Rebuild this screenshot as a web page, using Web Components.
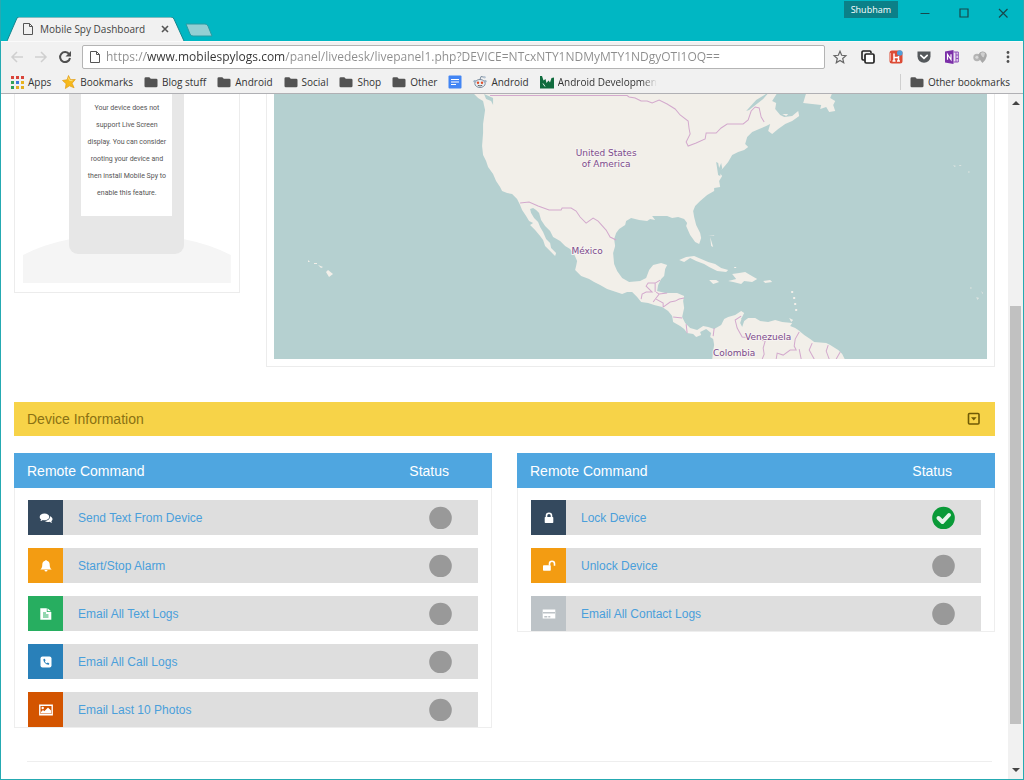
<!DOCTYPE html>
<html lang="en">
<head>
<meta charset="utf-8">
<title>Mobile Spy Dashboard</title>
<style>
  html, body { margin: 0; }
  body { background: #fff; color: #333; font-family: "Liberation Sans", Arial, sans-serif; font-size: 14px; }
</style>
</head>
<body>
<browser-window>
  <title-bar slot="title" tab="Mobile Spy Dashboard" user="Shubham"></title-bar>
  <nav-toolbar slot="toolbar"></nav-toolbar>
  <bookmark-bar slot="bookmarks">
    <bookmark-item icon="apps">Apps</bookmark-item>
    <bookmark-item icon="goldstar">Bookmarks</bookmark-item>
    <bookmark-item icon="folder">Blog stuff</bookmark-item>
    <bookmark-item icon="folder">Android</bookmark-item>
    <bookmark-item icon="folder">Social</bookmark-item>
    <bookmark-item icon="folder">Shop</bookmark-item>
    <bookmark-item icon="folder">Other</bookmark-item>
    <bookmark-item icon="docs" label="Google Docs"></bookmark-item>
    <bookmark-item icon="reddit">Android</bookmark-item>
    <bookmark-item icon="weekly" fade>Android Developmen</bookmark-item>
    <bookmark-item slot="end" icon="folder">Other bookmarks</bookmark-item>
  </bookmark-bar>
  <live-panel>
    <device-preview slot="device">Your device does not support Live Screen display. You can consider rooting your device and then install Mobile Spy to enable this feature.</device-preview>
    <location-map slot="map"></location-map>
    <info-bar slot="info">Device Information</info-bar>
    <command-panel slot="commands" heading="Remote Command">
      <command-row icon="comments" tone="#34495e">Send Text From Device</command-row>
      <command-row icon="bell" tone="#f39c12">Start/Stop Alarm</command-row>
      <command-row icon="file" tone="#27ae60">Email All Text Logs</command-row>
      <command-row icon="phone" tone="#2980b9">Email All Call Logs</command-row>
      <command-row icon="image" tone="#d35400">Email Last 10 Photos</command-row>
    </command-panel>
    <command-panel slot="commands" heading="Remote Command">
      <command-row icon="lock" tone="#34495e" done>Lock Device</command-row>
      <command-row icon="unlock" tone="#f39c12">Unlock Device</command-row>
      <command-row icon="card" tone="#bdc3c7">Email All Contact Logs</command-row>
    </command-panel>
  </live-panel>
</browser-window>

<script>
const ICONS = {
  page: '<path d="M2.500 1.500h6l3 3v8h-9zM8.500 1.500v3h3" fill="none" stroke="#555"/>',
  close: '<path d="M4 4l6 6M10 4l-6 6" stroke="#555" stroke-width="1.600"/>',
  back: '<path d="M13 7H2M7 2L2 7l5 5" fill="none" stroke="#cfcfcf" stroke-width="1.500"/>',
  forward: '<path d="M1 7h11M7 2l5 5-5 5" fill="none" stroke="#cfcfcf" stroke-width="1.500"/>',
  reload: '<path d="M11.200 4.200A5 5 0 1 0 12 8" fill="none" stroke="#505050" stroke-width="2"/><path d="M13 1v5.500H7.500z" fill="#505050"/>',
  minimize: '<path d="M2.500 7.500h9" stroke="#17484c"/>',
  maximize: '<path d="M3 3h8v8H3z" fill="none" stroke="#17484c" stroke-width="1.200"/>',
  quit: '<path d="M3 3l8.500 8.500M11.500 3L3 11.500" stroke="#17484c" stroke-width="1.200"/>',
  star: '<path d="M7 1.300l1.700 4 4.200.400-3.200 2.800 1 4.200L7 10.500l-3.700 2.200 1-4.200L1.100 5.700l4.200-.400z" fill="none" stroke="#666" stroke-width="1.200"/>',
  copy: '<path d="M3.500 10H2.200A1.200 1.200 0 0 1 1 8.800V2.200A1.200 1.200 0 0 1 2.200 1h6.600A1.200 1.200 0 0 1 10 2.200V3" fill="none" stroke="#222" stroke-width="1.600"/><rect x="4" y="4" width="9" height="9" rx="1.300" fill="#fff" stroke="#222" stroke-width="1.700"/>',
  redapp: '<rect x=".500" y=".500" width="13" height="13" rx="2.500" fill="#dc4b35"/><path d="M5 3.500v7M5 7.500h4.500M9.500 6v4.500M3.500 11h3M8 11h3" stroke="#fff" stroke-width="1.500"/><circle cx="10.800" cy="3" r="2.800" fill="#4f9fd8"/><path d="M1.500 3v8" stroke="#f2a092"/>',
  pocket: '<path d="M.500 1.500h13v5a6.500 6.200 0 0 1-13 0z" fill="#55595c"/><path d="M3.800 5.300L7 8.300l3.200-3" fill="none" stroke="#fff" stroke-width="1.700" stroke-linecap="round"/>',
  onenote: '<path d="M8.500 2h4.800v10H8.500M11 2v10M11 5h2.300M11 8.500h2.300" fill="#efe3f6" stroke="#8d4bb8" stroke-width="1"/><path d="M0 1.500L8.500 0v14L0 12.500z" fill="#7b2fa8"/><path d="M2.500 9.700V4.500l3.500 5V4.300" fill="none" stroke="#fff" stroke-width="1.200"/>',
  shade: '<circle cx="4" cy="7.500" r="3.700" fill="#b5b5b5"/><path d="M5.500 4.500Q7 1 10 1.500 14 2 13.800 6 13 10 9.500 13 6 10 5.500 4.500z" fill="#a8a8a8"/><path d="M7.500 3.500q2-2 4.500-.500l-1 4q-2 1-3.500-3.500z" fill="#cfcfcf"/><circle cx="3.800" cy="7.300" r="1.500" fill="#dadada"/>',
  more: '<g fill="#505050"><circle cx="7" cy="2.500" r="1.400"/><circle cx="7" cy="7" r="1.400"/><circle cx="7" cy="11.500" r="1.400"/></g>',
  apps: '<g><path d="M1 1h3v3H1zM6 1h3v3H6zM11 1h3v3h-3z" fill="#d9453a"/><path d="M1 6h3v3H1z" fill="#35a257"/><path d="M6 6h3v3H6z" fill="#3c78d8"/><path d="M11 6h3v3h-3z" fill="#e8b21f"/><path d="M1 11h3v3H1z" fill="#2f9d57"/><path d="M6 11h3v3H6zM11 11h3v3h-3z" fill="#e3ae22"/></g>',
  goldstar: '<path d="M6.500.500l2 4.200 4.800-.200-3.200 3.700 2 4.600-4.700-2-4 2.700.700-4.800L.500 5.500l4.600-.800z" fill="#f6b91c" stroke="#e39c12" stroke-width=".700"/><path d="M6.300 2.500l1.300 3 3 .200" fill="none" stroke="#fde27a"/>',
  folder: '<path d="M.500 3.500a1.300 1.300 0 0 1 1.300-1.300h3.500l1.500 1.500h5.400a1.300 1.300 0 0 1 1.300 1.300v6a1.300 1.300 0 0 1-1.300 1.300H1.800A1.300 1.300 0 0 1 .500 11z" fill="#535353"/>',
  docs: '<rect x=".500" y=".500" width="13" height="13" rx="1" fill="#4285f4"/><path d="M3 4.500h8M3 7h8M3 9.500h5" stroke="#fff" stroke-width="1.200"/>',
  reddit: '<ellipse cx="7" cy="8.500" rx="5.200" ry="4" fill="#e9eef3" stroke="#7d8ea0"/><path d="M7 4.500L8 1.500l3 .700" fill="none" stroke="#7d8ea0"/><circle cx="11.500" cy="2.300" r="1.200" fill="#b7c5d3"/><circle cx="1.800" cy="6.300" r="1.400" fill="#9fb1c3"/><circle cx="12.200" cy="6.300" r="1.400" fill="#9fb1c3"/><circle cx="5" cy="7.800" r="1.200" fill="#e2502a"/><circle cx="9" cy="7.800" r="1.200" fill="#e2502a"/><path d="M4.800 10.300q2.200 1.300 4.400 0" fill="none" stroke="#666"/>',
  weekly: '<path d="M0 1h14v12.500H0z" fill="#0f6b3d"/><path d="M2 1l1.500 4.500L5.500 4l1 4 2-2.500 1.500 2L11.500 3l2.500-.500V1z" fill="#f1f1f1"/><path d="M3 8.500l2 3" stroke="#e6f2ea"/>',
  expand: '<rect x="1.500" y="1.500" width="10.500" height="10.500" rx="1" fill="none" stroke="#6f5a05" stroke-width="1.600"/><path d="M4 5.300h5.600L6.800 8.600z" fill="#6f5a05"/>',
  comments: '<path d="M5.500 2.500C2.700 2.500.700 4 .700 5.900c0 1 .600 1.900 1.500 2.500-.100.600-.500 1.100-.900 1.500 1 0 1.900-.400 2.500-.900.500.100 1.100.200 1.700.200 2.700 0 4.800-1.500 4.800-3.300S8.200 2.500 5.500 2.500z" fill="#fff"/><path d="M11 5.300c.300 2.500-2 4.500-5 4.600.800.700 2 1.100 3.300 1.100.500 0 1-.100 1.400-.200.700.500 1.500.900 2.500.900-.400-.400-.800-.900-.900-1.500.700-.500 1.200-1.200 1.200-2.100 0-1.200-1-2.200-2.500-2.800z" fill="#fff"/>',
  bell: '<path d="M7 1c.500 0 .800.300.800.800 1.900.400 2.900 1.800 2.900 3.700 0 2.700.600 3.900 2 5H1.300c1.400-1.100 2-2.300 2-5 0-1.900 1-3.300 2.900-3.700 0-.500.300-.800.800-.800zM5.500 11h3a1.500 1.500 0 0 1-3 0z" fill="#fff"/>',
  file: '<path d="M1.300 1.300h6.500V5h4.500v7.700h-11zM8.500 1.300l3.600 3h-3.600z" fill="#fff"/><path d="M4 6h3M4 8h5.500M4 10h5.500" stroke="#27ae60"/>',
  phone: '<rect x="1.500" y="1.500" width="11" height="11" rx="2" fill="#fff"/><path d="M4.500 4c-.600 2.800 2.600 6.100 5.500 5.700l.300-1.200-1.500-.900-.900.700C6.700 7.800 6.200 7.100 5.900 6.200l.700-.900L5.700 3.700z" fill="#2980b9"/>',
  image: '<path d="M.800 2.300h12.400v9.400H.800z" fill="none" stroke="#fff" stroke-width="1.400"/><circle cx="3.700" cy="5" r="1.200" fill="#fff"/><path d="M2 10.500V9l2-2 1.300 1.300L9 4.600l3 3v2.900z" fill="#fff"/>',
  lock: '<rect x="2.700" y="6" width="8.600" height="6" rx=".700" fill="#fff"/><path d="M4.500 6.300V4.700a2.500 2.500 0 0 1 5 0v1.600" fill="none" stroke="#fff" stroke-width="1.600"/>',
  unlock: '<rect x="1" y="6.300" width="7.800" height="5.500" rx=".700" fill="#fff"/><path d="M7.500 6.500V4.700a2.500 2.500 0 0 1 5 0v2" fill="none" stroke="#fff" stroke-width="1.600"/>',
  card: '<path d="M.700 2.500h12.600v9H.700z" fill="#fff"/><path d="M1 5.800h12M2.300 9.700h3M6.300 9.700h2" stroke="#bdc3c7" stroke-width="1.400"/>'
};

function define(name, markup, setup) {
  const template = document.createElement('template');
  template.innerHTML = markup;
  customElements.define(name, class extends HTMLElement {
    constructor() {
      super();
      this.attachShadow({ mode: 'open' }).append(template.content.cloneNode(true));
    }
    connectedCallback() { if (setup) setup(this, this.shadowRoot); }
  });
}

define('ui-icon', `
  <style>
    :host { display: inline-flex; flex: none; width: 14px; height: 14px; }
    svg { width: 100%; height: 100%; overflow: visible; }
  </style>
  <svg viewBox="0 0 14 14" aria-hidden="true"></svg>`,
  (host, root) => { root.querySelector('svg').innerHTML = ICONS[host.getAttribute('name')]; });

define('browser-window', `
  <style>
    :host { display: flex; flex-direction: column; min-height: 100vh; box-sizing: border-box;
      border: 1px solid #25aab2; border-top: 0; background: #fff; }
    .body { display: flex; flex: 1; }
    main { flex: 1; min-width: 0; }
  </style>
  <slot name="title"></slot>
  <slot name="toolbar"></slot>
  <slot name="bookmarks"></slot>
  <div class="body"><main><slot></slot></main><scroll-rail></scroll-rail></div>`);

define('title-bar', `
  <style>
    :host { display: flex; align-items: flex-end; height: 41px; background: #00b7c3;
      font: 10px/24px "Open Sans", "Segoe UI", sans-serif; }
    .tab { display: grid; width: 178px; height: 24px; margin-left: 6px; }
    .tab > * { grid-area: 1 / 1; }
    .tab .label { display: flex; align-items: center; gap: 5px; padding: 0 13px 0 14px; color: #444; }
    .label span { flex: 1; white-space: nowrap; }
    button { display: grid; place-items: center; padding: 0; border: 0; background: none; }
    .new { align-self: flex-end; margin-bottom: 4px; }
    .spacer { flex: 1; }
    .user { align-self: flex-start; height: 17px; margin-top: 1px; padding: 0 7px; background: #0b8088; color: #fff;
      font: 9px/17px "Open Sans", "Segoe UI", sans-serif; }
    .controls { display: flex; align-self: flex-start; gap: 25px; padding: 6px 13px 0 20px; }
  </style>
  <div class="tab">
    <svg width="178" height="24" aria-hidden="true"><path d="M0 24L10 1q1-1 2-1h152q2 0 3 2l10 22z" fill="#f1f1f1"/><path d="M0 24L10 1q1-1 2-1h152q2 0 3 2l10 22" fill="none" stroke="#14858d"/></svg>
    <div class="label"><ui-icon name="page"></ui-icon><span></span><button aria-label="Close tab"><ui-icon name="close"></ui-icon></button></div>
  </div>
  <button class="new" aria-label="New tab"><svg width="28" height="14"><path d="M1 1h19q2 0 3 2l4 10H8q-2 0-3-2z" fill="#93cfd3" stroke="#2a9aa2"/></svg></button>
  <div class="spacer"></div>
  <button class="user"></button>
  <div class="controls">
    <button aria-label="Minimize"><ui-icon name="minimize"></ui-icon></button>
    <button aria-label="Maximize"><ui-icon name="maximize"></ui-icon></button>
    <button aria-label="Close"><ui-icon name="quit"></ui-icon></button>
  </div>`,
  (host, root) => {
    root.querySelector('.label span').textContent = host.getAttribute('tab');
    root.querySelector('.user').textContent = host.getAttribute('user');
  });

define('nav-toolbar', `
  <style>
    :host { display: flex; align-items: center; height: 30px; padding: 0 8px 0 9px; gap: 10px; background: #f1f1f1;
      border-top: 1px solid #fafafa; box-sizing: border-box; }
    button { display: grid; place-items: center; padding: 0; border: 0; background: none; }
    .address { flex: 1; display: flex; align-items: center; gap: 4px; height: 24px; box-sizing: border-box;
      padding: 0 5px; background: #fff; border: 1px solid #b4b4b4; border-radius: 2px; }
    input { flex: 1; min-width: 0; height: 22px; padding: 0; border: 0; outline: 0; color: #8c8c8c;
      font: 12px/22px "Open Sans", "Segoe UI", sans-serif;
      background: linear-gradient(90deg, #8c8c8c 40px, #333 40px 179px, #8c8c8c 179px);
      -webkit-background-clip: text; background-clip: text; -webkit-text-fill-color: transparent; }
    .actions { display: flex; gap: 14px; margin-left: -2px; }
  </style>
  <button aria-label="Back"><ui-icon name="back"></ui-icon></button>
  <button aria-label="Forward"><ui-icon name="forward"></ui-icon></button>
  <button aria-label="Reload"><ui-icon name="reload"></ui-icon></button>
  <div class="address">
    <ui-icon name="page"></ui-icon>
    <input type="text" aria-label="Address" value="https://www.mobilespylogs.com/panel/livedesk/livepanel1.php?DEVICE=NTcxNTY1NDMyMTY1NDgyOTI1OQ==">
  </div>
  <div class="actions">
    <button aria-label="Bookmark this page"><ui-icon name="star"></ui-icon></button>
    <button aria-label="Copy"><ui-icon name="copy"></ui-icon></button>
    <button aria-label="Extension"><ui-icon name="redapp"></ui-icon></button>
    <button aria-label="Pocket"><ui-icon name="pocket"></ui-icon></button>
    <button aria-label="OneNote"><ui-icon name="onenote"></ui-icon></button>
    <button aria-label="Extension"><ui-icon name="shade"></ui-icon></button>
    <button aria-label="Menu"><ui-icon name="more"></ui-icon></button>
  </div>`);

define('bookmark-bar', `
  <style>
    :host { display: flex; align-items: center; height: 23px; box-sizing: border-box; padding: 0 13px 0 9px;
      gap: 11px; background: #f1f1f1; border-bottom: 1px solid #b0b0b4; }
    .end { display: flex; margin-left: auto; padding-left: 9px; border-left: 1px solid #cfcfcf; }
  </style>
  <slot></slot>
  <div class="end"><slot name="end"></slot></div>`);

define('bookmark-item', `
  <style>
    :host { display: block; flex: none; }
    a { display: flex; align-items: center; gap: 4px; color: #333; text-decoration: none; white-space: nowrap;
      font: 10px/16px "Open Sans", "Segoe UI", sans-serif; }
    :host([fade]) span { -webkit-mask-image: linear-gradient(90deg, #000 85%, transparent); mask-image: linear-gradient(90deg, #000 85%, transparent); }
  </style>
  <a href="#"><ui-icon></ui-icon><span><slot></slot></span></a>`,
  (host, root) => {
    const old = root.querySelector('ui-icon');
    const icon = document.createElement('ui-icon');
    icon.setAttribute('name', host.getAttribute('icon'));
    old.replaceWith(icon);
    if (host.hasAttribute('label')) {
      root.querySelector('a').setAttribute('aria-label', host.getAttribute('label'));
      root.querySelector('span').remove();
    }
  });

define('scroll-rail', `
  <style>
    :host { display: flex; flex-direction: column; width: 15px; background: #f1f1f1; }
    button { display: grid; place-items: center; height: 17px; padding: 0; border: 0; background: none; }
    .before { flex: 195; }
    .thumb { flex: 418; margin: 0 2px; background: #c1c1c1; }
    .after { flex: 38; }
  </style>
  <button aria-label="Scroll up"><svg width="8" height="5"><path d="M0 5l4-4 4 4z" fill="#444"/></svg></button>
  <div class="before"></div><div class="thumb"></div><div class="after"></div>
  <button aria-label="Scroll down"><svg width="8" height="5"><path d="M0 0l4 4 4-4z" fill="#444"/></svg></button>`);

define('live-panel', `
  <style>
    :host { display: block; padding: 0 13px; }
    .top { display: grid; grid-template-columns: repeat(12, minmax(0, 1fr)); column-gap: 26px; align-items: start; }
    .device { grid-column: span 3; }
    .map { grid-column: span 9; }
    .info { margin: 35px 0 17px; }
    .commands { display: grid; grid-template-columns: 1fr 1fr; gap: 25px; align-items: start; }
    hr { margin: 33px 3px 0 13px; border: 0; border-top: 1px solid #eee; }
  </style>
  <div class="top">
    <div class="device"><slot name="device"></slot></div>
    <div class="map"><slot name="map"></slot></div>
  </div>
  <div class="info"><slot name="info"></slot></div>
  <div class="commands"><slot name="commands"></slot></div>
  <hr>`);

define('device-preview', `
  <style>
    :host { display: block; padding: 0 8px 9px; border: 1px solid #ececec; border-top: 0; }
    .scene { display: grid; justify-items: center; align-items: end; }
    .scene > * { grid-area: 1 / 1; }
    svg { width: 100%; height: 58px; }
    .phone { box-sizing: border-box; width: 115px; margin-bottom: 29px; padding: 0 12px 38px; background: #e7e7e7; border-radius: 0 0 9px 9px; }
    p { margin: 0; padding: 6px 4px 14px; background: #fff; color: #555; text-align: center;
      font: 7px/17px Roboto, "Arial Narrow", sans-serif; }
  </style>
  <div class="scene">
    <svg viewBox="0 0 206 58" preserveAspectRatio="none" aria-hidden="true"><path d="M0 58V30Q40 9 103 9t103 21v28z" fill="#f5f5f5"/></svg>
    <div class="phone"><p><slot></slot></p></div>
  </div>`);

define('location-map', `
  <style>
    :host { display: block; padding: 0 7px 7px; border: 1px solid #ececec; border-top: 0; }
    svg { display: block; width: 100%; height: 265px; background: #b5d0d0; }
    .land path { fill: #f2efe9; }
    .borders { fill: none; stroke: #d3a9cd; stroke-width: 1; }
    text { font: 9px "DejaVu Sans", sans-serif; fill: #7d4a8c; text-anchor: middle; stroke: #f6f3f0; stroke-width: 2; paint-order: stroke; }
  </style>
  <svg viewBox="274 94 713 265" preserveAspectRatio="xMinYMin slice" role="img" aria-label="Map of North and Central America">
    <g class="land">
      <path d="M473 93L478 98 483 101 485 110 484 117 483 124 483 133 482 146 483 155 486 161 488 167 493 174 496 181 500 187 502 191 507 193 512 194 517 199 520 205 522 210 526 216 529 221 533 223 530 225 535 230 540 236 543 240 545 246 550 251 555 256 556 253 551 248 550 243 546 239 543 232 540 227 538 222 534 218 531 213 530 209 533 208 536 210 539 213 541 220 545 226 550 231 553 237 560 241 565 246 570 249 574 254 577 261 576 266 575 270 581 276 589 279 594 282 600 285 607 289 616 292 622 294 627 292 632 292 637 297 641 302 648 303 654 305 662 307 668 311 672 316 673 322 680 326 684 329 687 333 693 334 696 337 701 335 700 332 706 329 711 333 710 337 713 339 714 345 713 351 712 360H845L842 354 838 350 830 345 826 343 814 342 810 339 804 335 798 330 795 328 790 326 792 323 782 322 775 320 768 322 760 321 755 318 748 318 744 321 741 319 744 313 741 311 735 315 728 317 724 319 721 325 714 329 708 327 703 326 697 330 690 328 685 323 682 317 684 308 683 301 684 296 677 293 665 293 657 291 658 285 661 279 664 276 665 269 667 265 661 263 653 265 649 270 646 278 640 281 629 282 622 278 617 271 614 264 613 253 615 246 614 239 616 233 619 229 625 225 626 221 631 218 639 220 647 221 650 219 655 220 652 216 659 216 667 216 672 218 678 217 684 219 687 223 686 226 690 235 695 242 699 244 701 238 700 233 696 225 694 217 693 211 695 206 700 201 707 195 714 191 714 188 720 187 719 181 722 176 719 172 723 168 728 162 732 155 738 152 744 150 748 147 745 144 747 137 752 132 759 129 766 126 770 124 768 131 772 134 778 129 785 124 792 121 799 116 798 111 792 116 784 117 780 115 775 109 776 103 772 101 777 93Z"/>
      <path d="M806 93L803 103 812 104 821 105 820 109 826 107 829 112 835 111 833 105 835 101 830 98 832 93ZM782 114L788 114 786 116ZM679 260L686 257 694 256 701 259 708 262 715 264 721 268 728 270 726 272 717 271 709 267 704 264 696 261 690 258 684 262ZM732 274L739 273 745 272 750 275 757 279 752 282 744 281 741 284 733 282 728 281 736 279ZM709 280L716 280 719 282 713 284ZM763 281L770 280 772 282 765 283ZM710 237L713 247 711 246ZM326 272L328 270 333 274 329 277ZM318 265L323 267 321 268ZM308 260L310 262 308 262ZM314 263h3v1h-3zM734 267h2v1h-2zM791 291h2v2h-2zM793 297h2v2h-2zM794 303h2v2h-2zM795 309h2v2h-2zM789 318l4 2-2 2z"/>
      <path d="M953 165l3 1-2 1zM959 165h2v1h-2zM968 171l2 1-2 1zM970 287l2 1-2 1zM976 297l3 1-2 2zM981 291l2 2-1 1zM708 236l6-1v1z" opacity=".600"/>
    </g>
    <g fill="#b5d0d0"><path d="M484 94l9 4v7l-2-4-5-2zM742 317l2 4-2 6-2-4zM716 162l2 1 1 5 2-5 1 5-2 8-2-1zM746 111l10-11 13-8-6 7-14 11z"/></g>
    <g class="borders">
      <path d="M490 95.500H627L629 97 635 98 641 101 647 101 652 103 659 100 667 104 675 109 680 115 688 121 689 129 690 134 686 142 688 146 696 143 705 139 706 133 716 133 721 128 727 124 743 124 748 120 751 111 755 107 759 108 761 117 764 122"/>
      <path d="M520 203L529 202 538 206 549 210 561 210 562 208 571 208 576 211 580 217 586 223 593 218 598 221 606 230 610 237 616 240"/>
      <path d="M641 299L642 294 646 292 652 292 646 286 648 283 655 283V292M655 283L660 280M656 292L659 294 656 298 653 302M656 299L663 303V307M659 294L667 293M663 307L670 302 675 301 679 299 684 298M673 317L682 318M687 333L686 324M713 336L714 328"/>
      <path d="M741 316L735 320 737 328 742 337 752 338 765 341 763 348 764 354 762 359M776 359L777 353 783 355 790 350 796 350 794 346 795 339 799 332M799 349L801 359M812 343L809 350 814 359M828 345L826 351 829 359M840 352L836 359"/>
    </g>
    <text x="606" y="156">United States</text>
    <text x="606" y="167">of America</text>
    <text x="587" y="254">México</text>
    <text x="768" y="340">Venezuela</text>
    <text x="734" y="356">Colombia</text>
  </svg>`);

define('info-bar', `
  <style>
    :host { display: flex; align-items: center; justify-content: space-between; height: 34px; padding: 0 14px 0 13px;
      background: #f7d348; color: #8a7113; font-size: 14px; }
    h2 { margin: 0; font: inherit; }
    button { display: grid; place-items: center; padding: 0; border: 0; background: none; }
  </style>
  <h2><slot></slot></h2>
  <button aria-label="Expand"><ui-icon name="expand"></ui-icon></button>`);

define('command-panel', `
  <style>
    :host { display: block; }
    header { display: flex; justify-content: space-between; align-items: center; height: 35px; box-sizing: border-box;
      padding: 0 43px 0 13px; background: #4fa6e0; color: #fff; font-size: 14px; }
    h3 { margin: 0; font: inherit; }
    .list { display: grid; gap: 13px; padding: 12px 13px 0; border: 1px solid #eee; border-top: 0; }
  </style>
  <header><h3></h3><span>Status</span></header>
  <div class="list" role="list"><slot></slot></div>`,
  (host, root) => { root.querySelector('h3').textContent = host.getAttribute('heading'); });

define('command-row', `
  <style>
    :host { display: flex; align-items: center; height: 35px; background: #dedede; }
    .badge { display: grid; place-items: center; width: 35px; height: 35px; background: var(--tone); }
    a { flex: 1; padding-left: 15px; color: #4a9fdb; text-decoration: none; font-size: 12px; line-height: 18px; white-space: nowrap; }
    .status { display: block; width: 23px; height: 23px; margin-right: 26px; }
    circle { fill: #999; }
    polyline { display: none; fill: none; stroke: #e8f5ec; stroke-width: 4; stroke-linecap: round; stroke-linejoin: round; }
    :host([done]) circle { fill: #0a9a38; }
    :host([done]) polyline { display: block; }
  </style>
  <span class="badge"></span>
  <a href="#"><slot></slot></a>
  <svg class="status" viewBox="0 0 23 23" role="img"><circle cx="11.500" cy="12" r="11.300"/><polyline points="6.500,12 10.500,16 17,9"/></svg>`,
  (host, root) => {
    host.setAttribute('role', 'listitem');
    host.style.setProperty('--tone', host.getAttribute('tone'));
    const icon = document.createElement('ui-icon');
    icon.setAttribute('name', host.getAttribute('icon'));
    root.querySelector('.badge').replaceChildren(icon);
    root.querySelector('.status').setAttribute('aria-label', host.hasAttribute('done') ? 'Completed' : 'Not run');
  });
</script>
</body>
</html>
